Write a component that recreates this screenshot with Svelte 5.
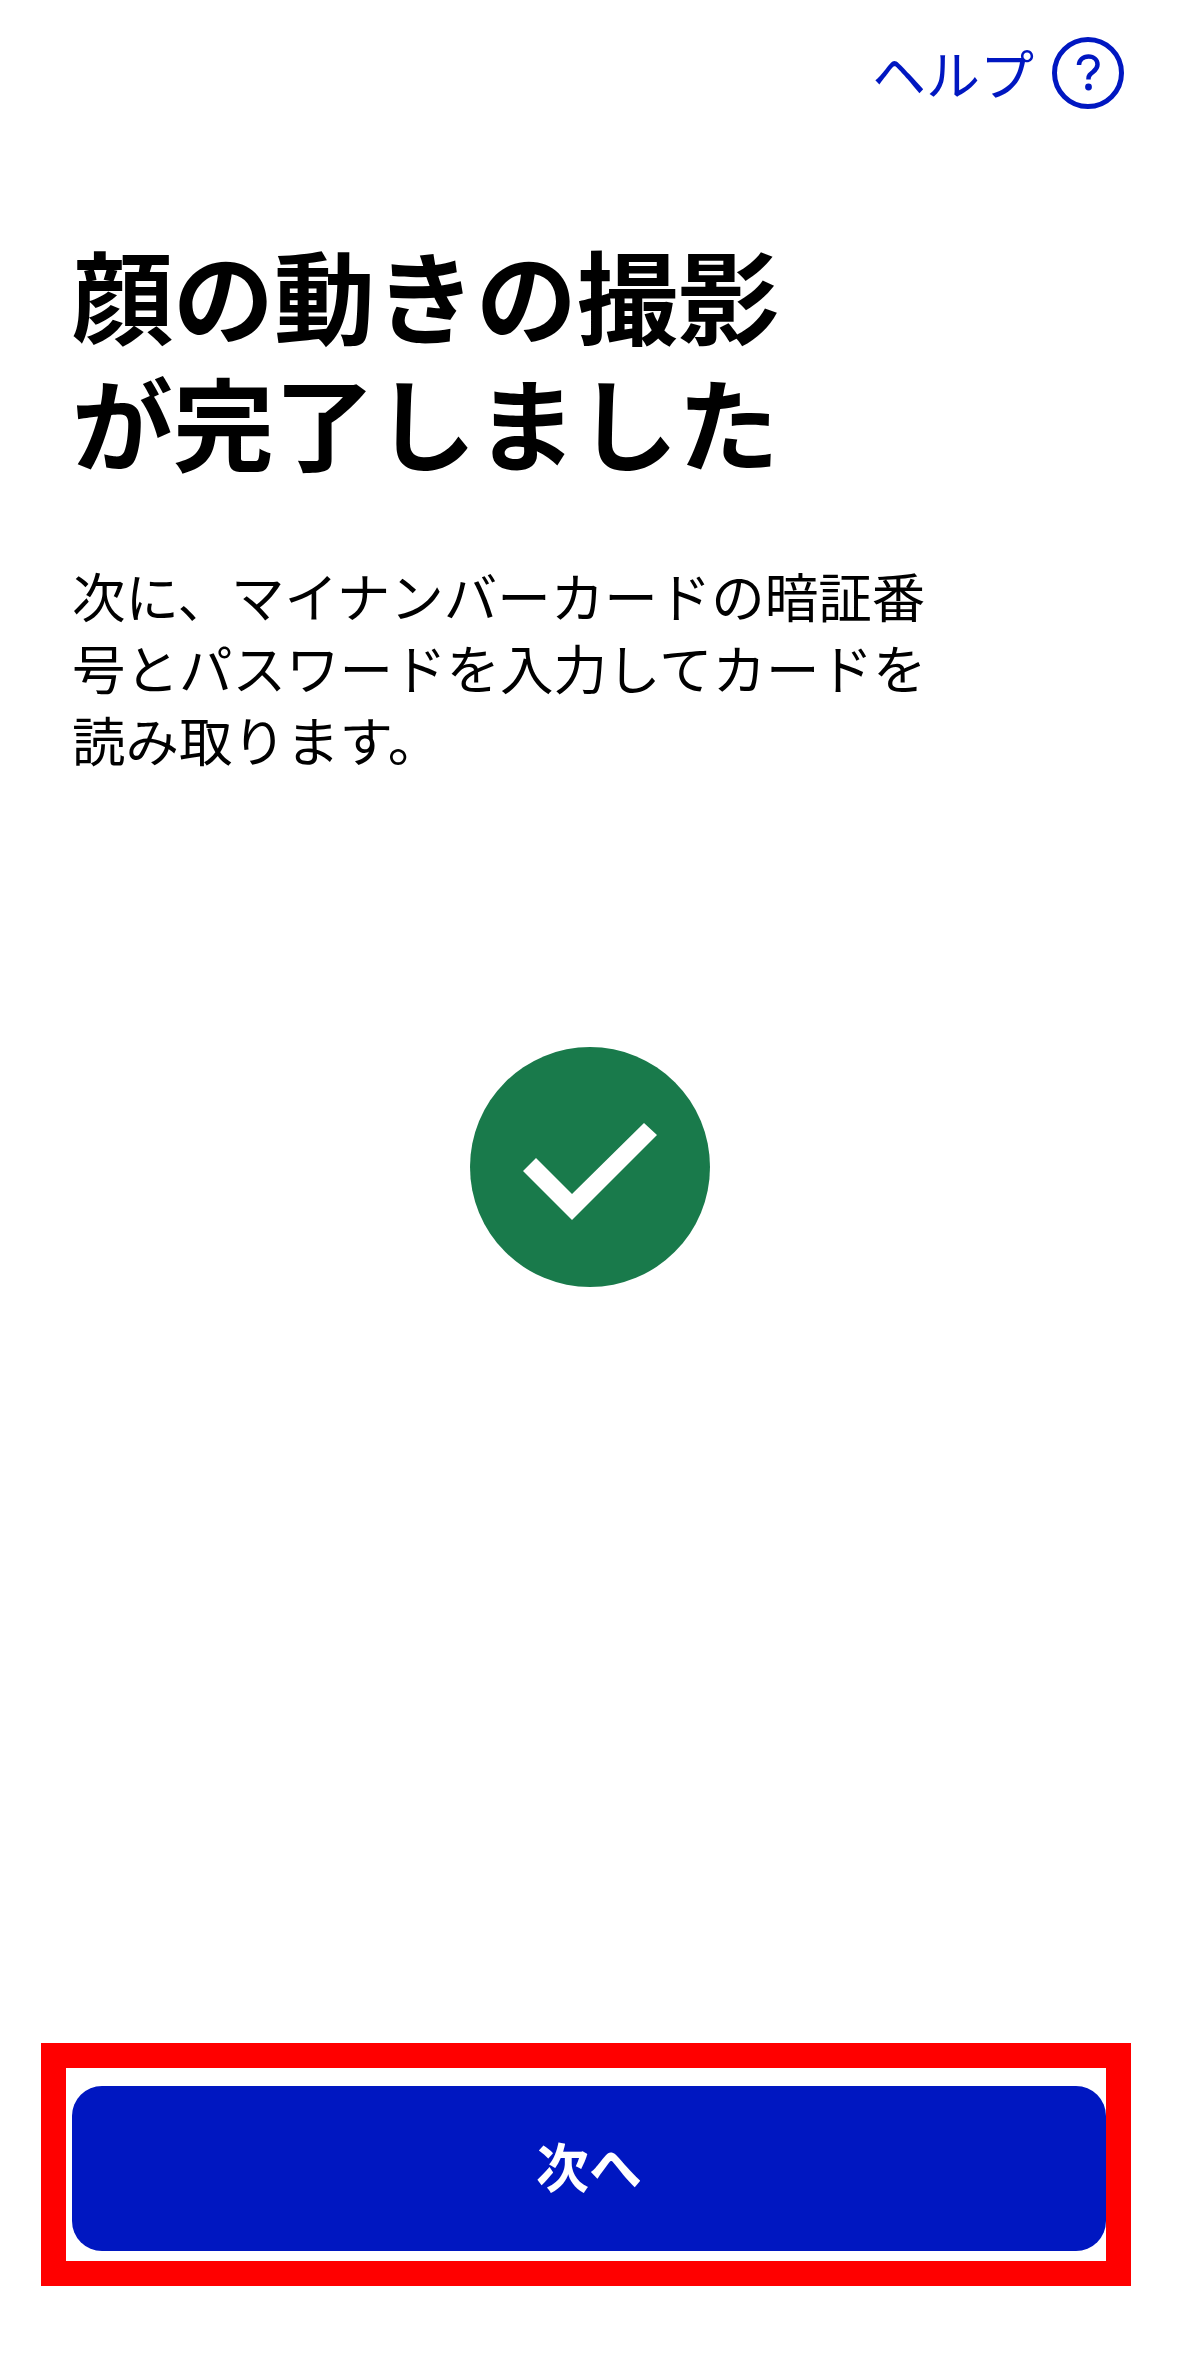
<script>
	const title = ['顔の動きの撮影', 'が完了しました'];
	const lines = ['次に、マイナンバーカードの暗証番', '号とパスワードを入力してカードを', '読み取ります。'];
</script>

<main class="page">
	<header class="top">
		<a class="help" href="#help">
			<span>ヘルプ</span>
			<svg width="72" height="72" viewBox="0 0 72 72" fill="none" aria-hidden="true">
				<circle cx="36" cy="36" r="33.5" stroke="#0017c1" stroke-width="5" />
				<path d="M27 28c0-5 4-8.500 9.500-8.500S45.500 23 45.500 27.500c0 3.500-2 5.500-4.500 7.500-3 2.300-4.500 3.500-4.500 6.500v1" stroke="#0017c1" stroke-width="4.500" />
				<circle cx="36.500" cy="50" r="3.400" fill="#0017c1" />
			</svg>
		</a>
	</header>

	<h1 class="title">
		{#each title as line}
			<span>{line}</span>
		{/each}
	</h1>

	<p class="lead">
		{#each lines as line}
			<span>{line}</span>
		{/each}
	</p>

	<div class="done">
		<svg width="240" height="240" viewBox="0 0 240 240" aria-hidden="true">
			<circle cx="120" cy="120" r="120" fill="#197a4b" />
			<path d="M53 124l13-13 36 36 72-71 13 12-85 85z" fill="#fff" />
		</svg>
	</div>

	<footer class="bottom">
		<button class="next" type="button">次へ</button>
		<div class="mark"></div>
	</footer>
</main>

<style>
	:global(body) {
		margin: 0;
		background: #fff;
	}

	.page {
		display: flex;
		flex-direction: column;
		box-sizing: border-box;
		height: 2358px;
		font-family: 'Noto Sans CJK JP', 'Noto Sans', sans-serif;
		color: #000;
		overflow: hidden;
	}

	.top {
		display: flex;
		justify-content: flex-end;
		padding: 37px 55px 0 0;
	}

	.help {
		display: flex;
		align-items: center;
		gap: 18px;
		font-size: 54px;
		line-height: 68px;
		color: #0017c1;
		text-decoration: none;
	}

	.title {
		display: flex;
		flex-direction: column;
		margin: 121px 0 0;
		padding-left: 72px;
		font-size: 101px;
		line-height: 127px;
		font-weight: 700;
	}

	.lead {
		display: flex;
		flex-direction: column;
		margin: 75px 0 0;
		padding-left: 72px;
		font-size: 53.5px;
		line-height: 72px;
		font-weight: 400;
	}

	.done {
		display: flex;
		justify-content: center;
		margin-top: 272px;
	}

	.bottom {
		position: relative;
		margin-top: auto;
		padding: 0 73px 107px 72px;
	}

	.next {
		display: block;
		width: 100%;
		height: 165px;
		padding-bottom: 9px;
		border: 0;
		border-radius: 30px;
		background: #0017c1;
		color: #fff;
		font-family: inherit;
		font-size: 53px;
		font-weight: 700;
	}

	.mark {
		position: absolute;
		left: 41px;
		right: 48px;
		top: -43px;
		bottom: 72px;
		border: 25px solid #f00;
	}
</style>
